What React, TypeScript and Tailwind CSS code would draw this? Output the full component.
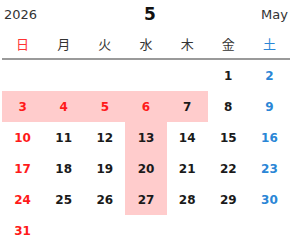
const weekdays = ["日", "月", "火", "水", "木", "金", "土"];

// May 2026 starts on Friday
const days: (number | null)[] = [
  null, null, null, null, null, 1, 2,
  ...Array.from({ length: 29 }, (_, i) => i + 3),
];

const holidays = [3, 4, 5, 6];
const highlighted = [3, 4, 5, 6, 7, 13, 20, 27];

function dayColor(day: number, col: number) {
  if (col === 0 || holidays.includes(day)) return "text-[#ff1a1a]";
  if (col === 6) return "text-[#2a86d6]";
  return "text-[#1a1a1a]";
}

export default function App() {
  return (
    <div
      className="w-[300px] h-[248px] bg-white overflow-hidden"
      style={{ fontFamily: '"DejaVu Sans", "Noto Sans CJK JP", sans-serif' }}
    >
      {/* Header */}
      <div className="h-[30px] flex items-center justify-between pl-[4px] pr-[12px] relative">
        <span className="text-[13px] text-[#333]">2026</span>
        <span className="absolute left-1/2 -translate-x-1/2 text-[17px] font-bold text-[#111]">5</span>
        <span className="text-[13px] text-[#333]">May</span>
      </div>

      <div className="w-[288px] ml-[2px]">
        {/* Weekdays */}
        <div className="grid grid-cols-7 h-[30px] border-b-2 border-[#9a9a9a]">
          {weekdays.map((w, i) => (
            <div
              key={w}
              className={`flex items-center justify-center text-[13px] ${
                i === 0 ? "text-[#ff3333]" : i === 6 ? "text-[#2a86d6]" : "text-[#333]"
              }`}
              style={{ fontFamily: '"Noto Sans CJK JP", sans-serif' }}
            >
              {w}
            </div>
          ))}
        </div>

        {/* Days */}
        <div className="grid grid-cols-7">
          {days.map((d, i) => (
            <div
              key={i}
              className={`h-[31px] flex items-center justify-center text-[12px] font-bold ${
                d && highlighted.includes(d) ? "bg-[#ffcccc]" : ""
              } ${d ? dayColor(d, i % 7) : ""}`}
            >
              {d ?? ""}
            </div>
          ))}
        </div>
      </div>
    </div>
  );
}
